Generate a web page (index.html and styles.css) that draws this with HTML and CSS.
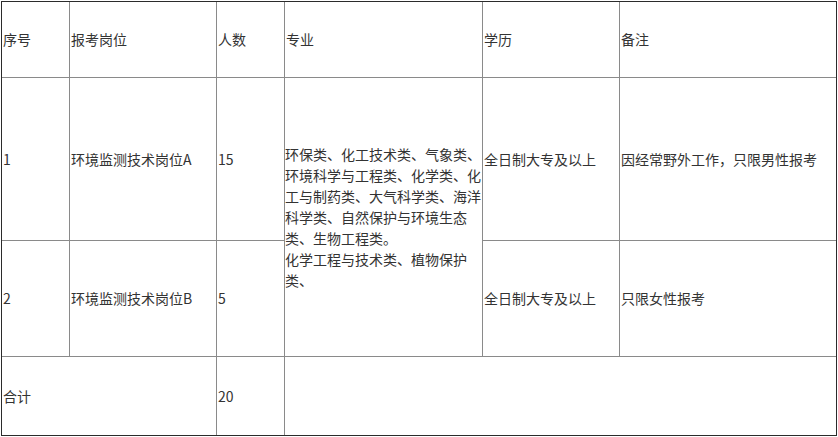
FILE: index.html
```html
<!DOCTYPE html>
<html lang="zh-CN">
<head>
<meta charset="utf-8">
<title>岗位表</title>
<link rel="stylesheet" href="styles.css">
</head>
<body>
<div class="table">
  <div class="cell">序号</div>
  <div class="cell">报考岗位</div>
  <div class="cell">人数</div>
  <div class="cell">专业</div>
  <div class="cell">学历</div>
  <div class="cell last-col">备注</div>

  <div class="cell">1</div>
  <div class="cell">环境监测技术岗位A</div>
  <div class="cell">15</div>
  <div class="cell major">
    <div class="major-text">
      <p>环保类、化工技术类、气象类、环境科学与工程类、化学类、化工与制药类、大气科学类、海洋科学类、自然保护与环境生态类、生物工程类。</p>
      <p>化学工程与技术类、植物保护类、</p>
    </div>
  </div>
  <div class="cell">全日制大专及以上</div>
  <div class="cell last-col">因经常野外工作，只限男性报考</div>

  <div class="cell">2</div>
  <div class="cell">环境监测技术岗位B</div>
  <div class="cell">5</div>
  <div class="cell">全日制大专及以上</div>
  <div class="cell last-col">只限女性报考</div>

  <div class="cell total last-row">合计</div>
  <div class="cell last-row">20</div>
  <div class="cell rest last-col last-row"></div>
</div>
</body>
</html>
```

FILE: styles.css
```css
html, body {
  margin: 0;
  padding: 0;
  background: #ffffff;
}

body {
  padding: 1px;
  font-family: "Noto Sans CJK SC", "Noto Sans", sans-serif;
  font-size: 14px;
  color: #333333;
}

.table {
  box-sizing: border-box;
  width: 836px;
  height: 435px;
  border: 1px solid #2b2b2b;
  display: grid;
  grid-template-columns: 68px 147px 68px 198px 137px 216px;
  grid-template-rows: 76px 163px 116px 78px;
}

.cell {
  box-sizing: border-box;
  border-right: 1px solid #8a8a8a;
  border-bottom: 1px solid #8a8a8a;
  display: flex;
  align-items: center;
  padding-left: 1px;
  white-space: nowrap;
  line-height: 21px;
}

.last-col {
  border-right: none;
}

.last-row {
  border-bottom: none;
}

.major {
  grid-row: span 2;
  white-space: normal;
  padding-left: 0;
}

.major-text {
  width: 197px;
}

.major-text p {
  margin: 0;
  line-break: strict;
}

.total {
  grid-column: span 2;
}

.rest {
  grid-column: span 3;
}
```
